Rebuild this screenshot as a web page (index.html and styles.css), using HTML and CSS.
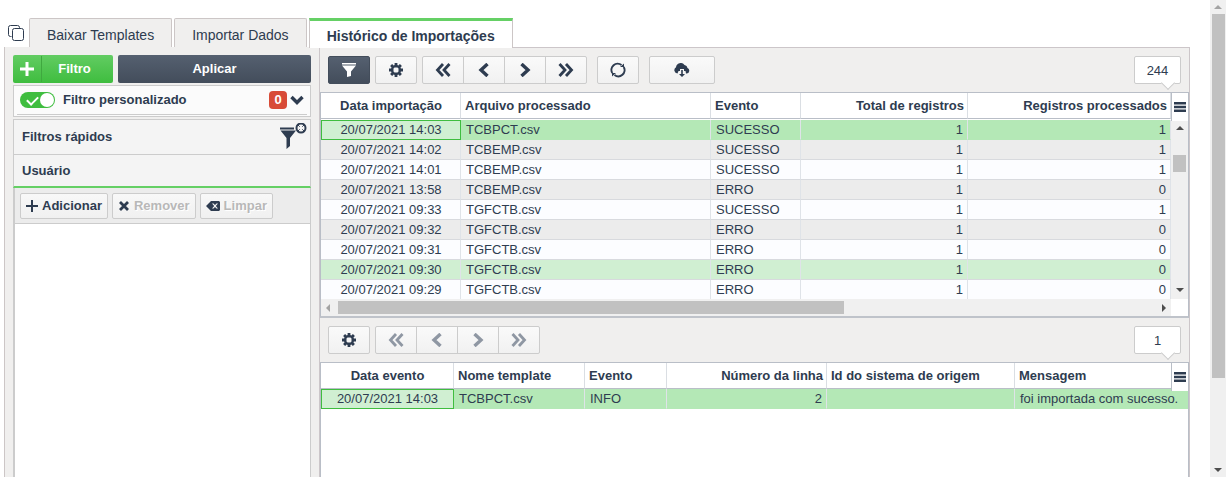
FILE: index.html
```html
<!DOCTYPE html>
<html lang="pt-BR">
<head>
    <meta charset="UTF-8">
    <meta name="viewport" content="width=device-width, initial-scale=1.0">
    <title>Histórico de Importações</title>
    <link rel="stylesheet" href="styles.css">
</head>
<body>
    <!-- shared icons -->
    <svg class="sprite" aria-hidden="true">
        <symbol id="gear" viewBox="0 0 14 14">
            <path fill-rule="evenodd" d="M5.6 0h2.800v2l1 .4 1.500-1.400 2 2-1.400 1.500.4 1H14v3h-2.100l-.4 1 1.400 1.500-2 2-1.500-1.400-1 .4v2H5.600v-2l-1-.4L3.100 13l-2-2 1.400-1.500-.4-1H0v-3h2.100l.4-1L1.100 3l2-2 1.500 1.400 1-.4zM5.500 4.500l-1 1v3l1 1h3l1-1v-3l-1-1z"/>
        </symbol>
        <symbol id="first" viewBox="0 0 16 14">
            <path class="line" d="M8 1L2.500 7L8 13M14.500 1L9 7L14.500 13"/>
        </symbol>
        <symbol id="prev" viewBox="0 0 16 14">
            <path class="line thick" d="M11.500 1L5 7L11.500 13"/>
        </symbol>
        <symbol id="next" viewBox="0 0 16 14">
            <path class="line thick" d="M4.500 1L11 7L4.500 13"/>
        </symbol>
        <symbol id="last" viewBox="0 0 16 14">
            <path class="line" d="M1.500 1L7 7L1.500 13M8 1L13.500 7L8 13"/>
        </symbol>
        <symbol id="menu" viewBox="0 0 12 10">
            <path d="M0 0h12v2.500H0zM0 3.700h12v2.500H0zM0 7.500h12V10H0z"/>
        </symbol>
    </svg>

    <div class="page">
        <main class="content">
            <nav class="tabs">
                <button class="windows" aria-label="Janelas">
                    <svg width="16" height="16" viewBox="0 0 16 16"><path class="thin" d="M3.500 11.500H2.500a2 2 0 0 1-2-2v-7a2 2 0 0 1 2-2h7a2 2 0 0 1 2 2v1"/><rect class="thin" x="4.500" y="3.500" width="11" height="12" rx="2"/></svg>
                </button>
                <button class="tab">Baixar Templates</button>
                <button class="tab">Importar Dados</button>
                <button class="tab active">Histórico de Importações</button>
            </nav>

            <div class="panels">
                <aside class="filters">
                    <div class="filter-actions">
                        <button class="btn-filter">
                            <span class="plus"><svg width="14" height="14" viewBox="0 0 14 14"><path d="M5.500 0h3v5.500H14v3H8.500V14h-3V8.500H0v-3h5.500z"/></svg></span>
                            <span class="btn-text">Filtro</span>
                        </button>
                        <button class="btn-apply">Aplicar</button>
                    </div>

                    <div class="custom-filter">
                        <div class="custom-row">
                            <input type="checkbox" class="switch" id="custom" checked>
                            <label for="custom">Filtro personalizado</label>
                            <span class="count">0</span>
                            <button class="expand" aria-label="Expandir">
                                <svg width="14" height="10" viewBox="0 0 14 10"><path class="line thick" d="M1.500 2L7 7.500L12.500 2"/></svg>
                            </button>
                        </div>
                    </div>

                    <section class="quick">
                        <div class="quick-title">
                            Filtros rápidos
                            <button class="clear-filter" aria-label="Limpar filtros">
                                <svg width="28" height="28" viewBox="0 0 28 28"><path d="M1 4.500h14v2H1zM1.500 7.500H17l-6 7.500v8L7.500 26V15z"/><circle class="ring" cx="22" cy="5" r="4.500"/><path class="thin" d="M19 2l1.700 1.700M25 2l-1.700 1.700M19 8l1.700-1.700M25 8l-1.700-1.700"/></svg>
                            </button>
                        </div>
                        <div class="quick-user">Usuário</div>
                        <div class="list">
                            <div class="list-bar">
                                <button class="small-btn"><svg width="12" height="12" viewBox="0 0 12 12"><path d="M5 0h2v5h5v2H7v5H5V7H0V5h5z"/></svg>Adicionar</button>
                                <button class="small-btn" disabled><svg width="12" height="10" viewBox="0 0 12 10"><path class="line" d="M2 1l8 8M10 1L2 9"/></svg>Remover</button>
                                <button class="small-btn" disabled><svg width="14" height="10" viewBox="0 0 14 10"><path fill-rule="evenodd" d="M5 0h8l1 1v8l-1 1H5L0 5zM6 2.500L8.200 5L6 7.500h1.500L9 6l1.500 1.500H12L9.800 5L12 2.500h-1.500L9 4L7.500 2.500z"/></svg>Limpar</button>
                            </div>
                        </div>
                    </section>
                </aside>

                <div class="results">
                    <div class="toolbar">
                        <button class="tool dark" aria-label="Filtrar"><svg width="14" height="14" viewBox="0 0 14 14"><path d="M0 0h14v1.500H0zM0 2.500h14L9 8.500V13l-4 1V8.500z"/></svg></button>
                        <button class="tool" aria-label="Configurações"><svg width="14" height="14"><use href="#gear"/></svg></button>
                        <div class="pager">
                            <button aria-label="Primeiro"><svg width="16" height="14"><use href="#first"/></svg></button>
                            <button aria-label="Anterior"><svg width="16" height="14"><use href="#prev"/></svg></button>
                            <button aria-label="Próximo"><svg width="16" height="14"><use href="#next"/></svg></button>
                            <button aria-label="Último"><svg width="16" height="14"><use href="#last"/></svg></button>
                        </div>
                        <button class="tool spaced" aria-label="Atualizar"><svg width="16" height="16" viewBox="0 0 16 16"><path class="arc" d="M2.300 11A6.200 6.200 0 0 1 11.500 3M13.700 5A6.200 6.200 0 0 1 4.500 13"/><path d="M10 5h4V1.500zM6 11H2v3.500z"/></svg></button>
                        <button class="tool wide" aria-label="Baixar"><svg width="16" height="14" viewBox="0 0 16 14"><path d="M3.500 10.500A3.400 3.400 0 0 1 2 4.200A4.700 4.700 0 0 1 10.500 2A3.600 3.600 0 0 1 13.500 5A2.900 2.900 0 0 1 13 10.500H12L11.500 8H10V6H6v2H4.500z"/><path d="M7.200 7h1.600v4H11l-3 3-3-3h2.200z"/></svg></button>
                        <output class="bubble">244</output>
                    </div>

                    <div class="grid">
                        <div class="grid-view">
                            <table class="imports">
                                <colgroup><col class="w140"><col class="w250"><col class="w90"><col class="w167"><col></colgroup>
                                <thead>
                                    <tr><th class="center">Data importação</th><th>Arquivo processado</th><th>Evento</th><th class="num">Total de registros</th><th class="num">Registros processados</th></tr>
                                </thead>
                                <tbody>
                                    <tr class="selected"><td class="center focus">20/07/2021 14:03</td><td>TCBPCT.csv</td><td>SUCESSO</td><td class="num">1</td><td class="num">1</td></tr>
                                    <tr><td class="center">20/07/2021 14:02</td><td>TCBEMP.csv</td><td>SUCESSO</td><td class="num">1</td><td class="num">1</td></tr>
                                    <tr><td class="center">20/07/2021 14:01</td><td>TCBEMP.csv</td><td>SUCESSO</td><td class="num">1</td><td class="num">1</td></tr>
                                    <tr><td class="center">20/07/2021 13:58</td><td>TCBEMP.csv</td><td>ERRO</td><td class="num">1</td><td class="num">0</td></tr>
                                    <tr><td class="center">20/07/2021 09:33</td><td>TGFCTB.csv</td><td>SUCESSO</td><td class="num">1</td><td class="num">1</td></tr>
                                    <tr><td class="center">20/07/2021 09:32</td><td>TGFCTB.csv</td><td>ERRO</td><td class="num">1</td><td class="num">0</td></tr>
                                    <tr><td class="center">20/07/2021 09:31</td><td>TGFCTB.csv</td><td>ERRO</td><td class="num">1</td><td class="num">0</td></tr>
                                    <tr class="hovered"><td class="center">20/07/2021 09:30</td><td>TGFCTB.csv</td><td>ERRO</td><td class="num">1</td><td class="num">0</td></tr>
                                    <tr><td class="center">20/07/2021 09:29</td><td>TGFCTB.csv</td><td>ERRO</td><td class="num">1</td><td class="num">0</td></tr>
                                </tbody>
                            </table>
                            <div class="scroll-x">
                                <span class="arrow left"></span>
                                <div class="track"><div class="thumb"></div></div>
                                <span class="arrow right"></span>
                            </div>
                        </div>
                        <div class="grid-side">
                            <button class="menu" aria-label="Colunas"><svg width="12" height="10"><use href="#menu"/></svg></button>
                            <div class="scroll-y">
                                <span class="arrow up"></span>
                                <div class="track"><div class="thumb"></div></div>
                                <span class="arrow down"></span>
                            </div>
                        </div>
                    </div>

                    <div class="toolbar">
                        <button class="tool" aria-label="Configurações"><svg width="14" height="14"><use href="#gear"/></svg></button>
                        <div class="pager">
                            <button disabled aria-label="Primeiro"><svg width="16" height="14"><use href="#first"/></svg></button>
                            <button disabled aria-label="Anterior"><svg width="16" height="14"><use href="#prev"/></svg></button>
                            <button disabled aria-label="Próximo"><svg width="16" height="14"><use href="#next"/></svg></button>
                            <button disabled aria-label="Último"><svg width="16" height="14"><use href="#last"/></svg></button>
                        </div>
                        <output class="bubble">1</output>
                    </div>

                    <div class="grid events">
                        <table>
                            <colgroup><col class="w133"><col class="w131"><col class="w82"><col class="w160"><col class="w188"><col></colgroup>
                            <thead>
                                <tr><th class="center">Data evento</th><th>Nome template</th><th>Evento</th><th class="num">Número da linha</th><th>Id do sistema de origem</th><th>Mensagem</th></tr>
                            </thead>
                            <tbody>
                                <tr class="selected"><td class="center focus">20/07/2021 14:03</td><td>TCBPCT.csv</td><td>INFO</td><td class="num">2</td><td></td><td>foi importada com sucesso.</td></tr>
                            </tbody>
                        </table>
                        <button class="menu" aria-label="Colunas"><svg width="12" height="10"><use href="#menu"/></svg></button>
                    </div>
                </div>
            </div>
        </main>

        <div class="page-scroll">
            <span class="arrow up"></span>
            <div class="track"><div class="thumb"></div></div>
            <span class="arrow down"></span>
        </div>
    </div>
</body>
</html>
```
FILE: styles.css
```css
* {
    box-sizing: border-box;
}

body {
    margin: 0;
    background-color: #fff;
    color: #2e3c50;
    font-family: Arial, "Liberation Sans", sans-serif;
    font-size: 13px;
    line-height: 16px;
}

button {
    margin: 0;
    padding: 0;
    border: 0;
    background: none;
    color: inherit;
    font: inherit;
    cursor: pointer;
}

svg {
    display: block;
    flex: none;
    fill: currentColor;
}

.sprite {
    position: absolute;
    width: 0;
    height: 0;
}

.line {
    fill: none;
    stroke: currentColor;
    stroke-width: 2.8;
}

.thick {
    stroke-width: 3.4;
}

.thin {
    fill: none;
    stroke: currentColor;
    stroke-width: 1;
}

.ring,
.arc {
    fill: none;
    stroke: currentColor;
    stroke-width: 2;
}

.page {
    display: flex;
    height: 100vh;
    overflow: hidden;
}

.content {
    flex: 1;
    min-width: 0;
    display: flex;
    flex-direction: column;
    padding: 18px 20px 0 4px;
}

/* tabs */
.tabs {
    display: flex;
    gap: 2px;
    height: 29px;
}

.windows {
    width: 23px;
    padding: 0 0 0 4px;
}

.tab {
    padding: 4px 17px 0;
    border: 1px solid #ccc6c6;
    border-bottom: 0;
    border-radius: 2px 2px 0 0;
    background-color: #f0efee;
    font-size: 14px;
}

.tab.active {
    position: relative;
    height: 30px;
    padding-top: 2px;
    border-top: 3px solid #65d065;
    border-radius: 0;
    background-color: #fff;
    font-weight: bold;
}

.panels {
    flex: 1;
    min-height: 0;
    display: flex;
}

/* left side */
.filters {
    flex: none;
    width: 315px;
    display: flex;
    flex-direction: column;
    gap: 2px;
    padding: 8px 8px 0;
    border-left: 1px solid #ccc6c6;
    background-color: #f0efee;
}

.filter-actions {
    display: flex;
    gap: 5px;
    height: 28px;
    color: #fff;
    font-weight: bold;
}

.btn-filter {
    display: flex;
    align-items: center;
    width: 100px;
    border-radius: 2px;
    background: linear-gradient(#62cc62, #3fbd3f);
}

.plus {
    display: flex;
    align-items: center;
    justify-content: center;
    width: 29px;
    height: 26px;
    border-right: 1px solid #3fa83f;
}

.btn-text {
    flex: 1;
    padding-right: 6px;
}

.btn-apply {
    flex: 1;
    border-radius: 2px;
    background: linear-gradient(#556070, #434d5b);
}

.custom-filter {
    padding: 0 3px 1px;
    border: 1px solid #ccc;
    background-color: #fbfbfb;
}

.custom-row {
    display: flex;
    align-items: center;
    height: 29px;
    padding: 0 3px;
    border-bottom: 1px solid #ccc;
    font-weight: bold;
}

.custom-row label {
    flex: 1;
    padding-left: 8px;
}

.switch {
    appearance: none;
    position: relative;
    width: 35px;
    height: 16px;
    margin: 0;
    border-radius: 8px;
    background-color: #3fbd3f;
}

.switch::before {
    content: "";
    position: absolute;
    top: 1px;
    right: 1px;
    width: 14px;
    height: 14px;
    border-radius: 7px;
    background-color: #fff;
}

.switch::after {
    content: "";
    position: absolute;
    top: 4px;
    left: 7px;
    width: 9px;
    height: 5px;
    border-left: 2px solid #fff;
    border-bottom: 2px solid #fff;
    transform: rotate(-45deg);
}

.count {
    width: 18px;
    height: 18px;
    border-radius: 4px;
    background-color: #d84b37;
    color: #fff;
    line-height: 18px;
    text-align: center;
}

.expand {
    padding-left: 3px;
}

.quick {
    flex: 1;
    display: flex;
    flex-direction: column;
    border-top: 1px solid #ccc;
    font-weight: bold;
}

.quick-title,
.quick-user {
    display: flex;
    align-items: center;
    justify-content: space-between;
    padding: 0 3px 0 8px;
    border: 1px solid #ccc;
    border-top: 0;
    background-color: #f4f4f4;
}

.quick-title {
    height: 35px;
}

.quick-user {
    height: 33px;
    border-bottom: 2px solid #65d065;
}

.list {
    flex: 1;
    border: 1px solid #ccc;
    border-width: 0 1px 0 2px;
    background-color: #fff;
}

.list-bar {
    display: flex;
    gap: 4px;
    padding: 5px 5px 4px;
    border-bottom: 1px solid #ccc;
    background-color: #ececec;
}

.small-btn {
    display: flex;
    align-items: center;
    gap: 4px;
    height: 26px;
    padding: 0 5px;
    border: 1px solid #ccc;
    border-radius: 2px;
    background: linear-gradient(#f8f8f8, #f0f0f0);
}

.small-btn:disabled {
    color: #b8b8b8;
    text-shadow: 1px 1px 0 #fff;
}

.small-btn svg {
    color: #2e3c50;
}

/* right side */
.results {
    flex: 1;
    min-width: 0;
    display: flex;
    flex-direction: column;
    border: 1px solid #ccc6c9;
    border-bottom: 0;
    background-color: #f0efee;
}

.toolbar {
    display: flex;
    gap: 5px;
    padding: 8px;
}

.tool,
.pager button {
    display: flex;
    align-items: center;
    justify-content: center;
    width: 42px;
    height: 28px;
    border: 1px solid #ccc;
    border-radius: 2px;
    background: linear-gradient(#fafafa, #f1f1f1);
}

.tool.dark {
    border-color: #434d5b;
    background: linear-gradient(#556070, #434d5b);
    color: #fff;
}

.tool.spaced {
    margin: 0 5px;
}

.tool.wide {
    width: 66px;
}

.pager {
    display: flex;
}

.pager button {
    border-radius: 0;
}

.pager button + button {
    margin-left: -1px;
}

.pager button:first-child {
    border-radius: 2px 0 0 2px;
}

.pager button:last-child {
    border-radius: 0 2px 2px 0;
}

.pager button:disabled {
    color: #8f97a3;
}

.bubble {
    position: relative;
    width: 47px;
    height: 28px;
    margin-left: auto;
    border: 1px solid #ccc;
    border-radius: 2px;
    background-color: #fff;
    line-height: 28px;
    text-align: center;
}

.bubble::after {
    content: "";
    position: absolute;
    right: 7px;
    bottom: -5px;
    width: 9px;
    height: 9px;
    border: solid #ccc;
    border-width: 0 1px 1px 0;
    background-color: #fff;
    transform: rotate(45deg);
}

/* tables */
.grid {
    position: relative;
    display: flex;
    border: 1px solid #b9bec7;
    border-bottom: 2px solid #bfc3ca;
    background-color: #fff;
}

.grid-view {
    flex: 1;
    min-width: 0;
    height: 223px;
    display: flex;
    flex-direction: column;
    overflow: hidden;
    position: relative;
}

table {
    width: 100%;
    table-layout: fixed;
    border-spacing: 0;
}

.w82 { width: 82px; }
.w90 { width: 90px; }
.w131 { width: 131px; }
.w133 { width: 133px; }
.w140 { width: 140px; }
.w160 { width: 160px; }
.w167 { width: 167px; }
.w188 { width: 188px; }
.w250 { width: 250px; }

th,
td {
    overflow: hidden;
    white-space: nowrap;
    text-align: left;
}

th {
    height: 26px;
    padding: 0 3px 0 4px;
    border-right: 1px solid #dadee3;
    border-bottom: 1px solid #b9bec7;
}

td {
    height: 20px;
    padding: 1px 4px 0 5px;
    border-right: 1px solid #dfe3e8;
    border-bottom: 1px solid #d8dade;
    background-color: #fcfdff;
}

/* thin gap between the header and the first row */
.imports thead::after {
    content: "";
    display: table-row;
    height: 1px;
}

tr:nth-child(even) td {
    background-color: #ececec;
}

tbody .selected td {
    border-bottom-color: #b4e8b6;
    background-color: #b4e8b6;
}

tbody .hovered td {
    background-color: #d0efd2;
}

.center {
    text-align: center;
}

.num {
    text-align: right;
}

tbody .selected .focus {
    padding: 0;
    border: 1px solid #3fbd3f;
    background-color: #d0efd2;
}

.events {
    flex: 1;
    align-items: flex-start;
    border-bottom: 0;
}

.events th:last-child,
.events td:last-child {
    border-right: 0;
}

.menu {
    display: flex;
    align-items: center;
    justify-content: center;
    width: 17px;
    height: 28px;
    border-left: 1px solid #b9bec7;
    background-color: #fff;
}

.events .menu {
    position: absolute;
    top: 0;
    right: 0;
}

/* scroll bars */
.grid-side {
    display: flex;
    flex-direction: column;
    width: 17px;
}

.scroll-y,
.page-scroll {
    display: flex;
    flex-direction: column;
    align-items: center;
    background-color: #f0f0f0;
}

.scroll-y {
    height: 178px;
    padding: 5px 0 7px;
}

.track {
    flex: 1;
}

.thumb {
    background-color: #c1c1c1;
}

.scroll-y .track {
    padding-top: 25px;
}

.scroll-y .thumb {
    width: 13px;
    height: 17px;
}

.scroll-x {
    position: absolute;
    right: 0;
    bottom: 0;
    left: 0;
    display: flex;
    align-items: center;
    height: 17px;
    padding: 0 5px;
    background-color: #f0f0f0;
}

.scroll-x .track {
    padding: 0 8px;
}

.scroll-x .thumb {
    width: 62%;
    height: 13px;
}

.page-scroll {
    width: 16px;
    padding: 5px 0;
}

.page-scroll .track {
    padding: 5px 0;
}

.page-scroll .thumb {
    width: 13px;
    height: 81%;
}

.arrow {
    border: 4px solid transparent;
}

.arrow.up {
    border-top: 0;
    border-bottom-color: #4d4d4d;
}

.page-scroll .arrow.up {
    border-bottom-color: #a3a3a3;
}

.arrow.down {
    border-bottom: 0;
    border-top-color: #4d4d4d;
}

.arrow.left {
    border-left: 0;
    border-right-color: #a3a3a3;
}

.arrow.right {
    border-right: 0;
    border-left-color: #4d4d4d;
}
```
